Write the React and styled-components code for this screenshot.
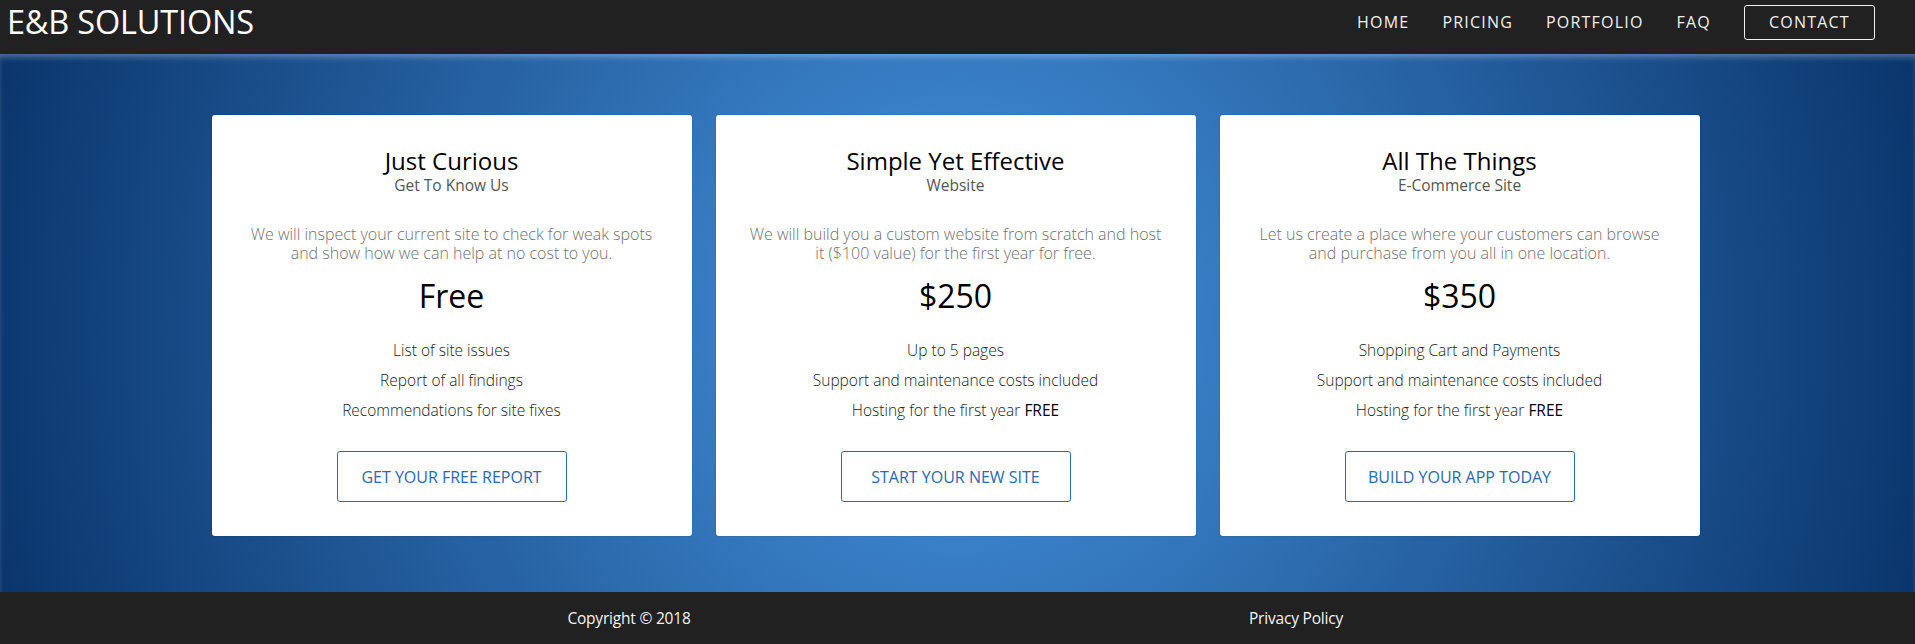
import React from "react";
import styled, { createGlobalStyle } from "styled-components";

const GlobalStyle = createGlobalStyle`
  * { box-sizing: border-box; }
  html, body { margin: 0; padding: 0; }
  body {
    font-family: "Open Sans", "Liberation Sans", sans-serif;
    background: #212121;
  }
`;

const Page = styled.div`
  display: flex;
  flex-direction: column;
  min-height: 644px;
`;

const Header = styled.header`
  height: 54px;
  background: #212121;
  display: flex;
  align-items: center;
  justify-content: space-between;
  padding: 0 40px 0 7px;
`;

const Logo = styled.a`
  color: #ffffff;
  font-size: 32.5px;
  font-weight: 400;
  line-height: 1;
  text-decoration: none;
  margin-top: -10px;
  letter-spacing: -0.2px;
`;

const Nav = styled.nav`
  display: flex;
  align-items: center;
  gap: 33px;
  margin-top: -10px;
`;

const NavLink = styled.a`
  color: #f2f2f2;
  font-size: 16px;
  letter-spacing: 1.2px;
  text-decoration: none;
  text-transform: uppercase;
`;

const NavButton = styled(NavLink)`
  border: 1px solid #f0f0f0;
  border-radius: 3px;
  height: 35px;
  width: 131px;
  display: flex;
  align-items: center;
  justify-content: center;
`;

const Main = styled.main`
  flex: 1;
  background: radial-gradient(circle, #3e88d0 0%, #3a81c8 20%, #0a356c 100%);
  box-shadow: inset 0 5px 6px -2px rgba(255, 255, 255, 0.3);
  padding: 61px 0 56px;
  display: flex;
  justify-content: center;
`;

const Cards = styled.div`
  display: grid;
  grid-template-columns: repeat(3, 480px);
  gap: 24px;
  transform: translateX(-2px);
`;

const Card = styled.section`
  background: #ffffff;
  border-radius: 3px;
  padding: 32px 32px 34px;
  display: flex;
  flex-direction: column;
  align-items: center;
  text-align: center;
  box-shadow: 0 0 2px rgba(0, 0, 0, 0.2);
`;

const Title = styled.h3`
  margin: 0;
  font-size: 24px;
  line-height: 28px;
  font-weight: 400;
  color: #000;
`;

const Subtitle = styled.div`
  font-size: 15.5px;
  line-height: 20px;
  color: #555;
`;

const Description = styled.p`
  margin: 30px 0 0;
  font-size: 16px;
  line-height: 19px;
  font-weight: 300;
  color: #707070;
`;

const Price = styled.div`
  margin-top: 13px;
  font-size: 32px;
  line-height: 40px;
  color: #000;
`;

const Features = styled.ul`
  list-style: none;
  margin: 19px 0 0;
  padding: 0;
`;

const Feature = styled.li`
  font-size: 15.5px;
  line-height: 30px;
  font-weight: 300;
  color: #222;

  strong {
    font-weight: 500;
    color: #000;
  }
`;

const CTA = styled.a`
  margin-top: 26px;
  height: 51px;
  width: 230px;
  display: flex;
  align-items: center;
  justify-content: center;
  border: 1px solid #2c6ab0;
  border-radius: 3px;
  color: #2b68b2;
  font-size: 16px;
  text-transform: uppercase;
  text-decoration: none;
`;

const Footer = styled.footer`
  height: 52px;
  background: #212121;
  display: flex;
  justify-content: center;
  align-items: center;
`;

const FooterGrid = styled.div`
  display: grid;
  grid-template-columns: repeat(2, 667px);
  margin-left: 10px;
`;

const FooterText = styled.a`
  color: #f4f4f4;
  font-size: 15.5px;
  text-align: center;
  text-decoration: none;
  letter-spacing: -0.2px;
`;

const plans = [
  {
    title: "Just Curious",
    subtitle: "Get To Know Us",
    desc: "We will inspect your current site to check for weak spots and show how we can help at no cost to you.",
    price: "Free",
    features: ["List of site issues", "Report of all findings", "Recommendations for site fixes"],
    freeHosting: false,
    cta: "Get your free report",
  },
  {
    title: "Simple Yet Effective",
    subtitle: "Website",
    desc: "We will build you a custom website from scratch and host it ($100 value) for the first year for free.",
    price: "$250",
    features: ["Up to 5 pages", "Support and maintenance costs included"],
    freeHosting: true,
    cta: "Start your new site",
  },
  {
    title: "All The Things",
    subtitle: "E-Commerce Site",
    desc: "Let us create a place where your customers can browse and purchase from you all in one location.",
    price: "$350",
    features: ["Shopping Cart and Payments", "Support and maintenance costs included"],
    freeHosting: true,
    cta: "Build your app today",
  },
];

export default function App() {
  return (
    <Page>
      <GlobalStyle />
      <Header>
        <Logo href="#">E&amp;B SOLUTIONS</Logo>
        <Nav>
          <NavLink href="#">Home</NavLink>
          <NavLink href="#">Pricing</NavLink>
          <NavLink href="#">Portfolio</NavLink>
          <NavLink href="#">FAQ</NavLink>
          <NavButton href="#">Contact</NavButton>
        </Nav>
      </Header>
      <Main>
        <Cards>
          {plans.map((p) => (
            <Card key={p.title}>
              <Title>{p.title}</Title>
              <Subtitle>{p.subtitle}</Subtitle>
              <Description>{p.desc}</Description>
              <Price>{p.price}</Price>
              <Features>
                {p.features.map((f) => (
                  <Feature key={f}>{f}</Feature>
                ))}
                {p.freeHosting && (
                  <Feature>
                    Hosting for the first year <strong>FREE</strong>
                  </Feature>
                )}
              </Features>
              <CTA href="#">{p.cta}</CTA>
            </Card>
          ))}
        </Cards>
      </Main>
      <Footer>
        <FooterGrid>
          <FooterText>Copyright © 2018</FooterText>
          <FooterText href="#">Privacy Policy</FooterText>
        </FooterGrid>
      </Footer>
    </Page>
  );
}
